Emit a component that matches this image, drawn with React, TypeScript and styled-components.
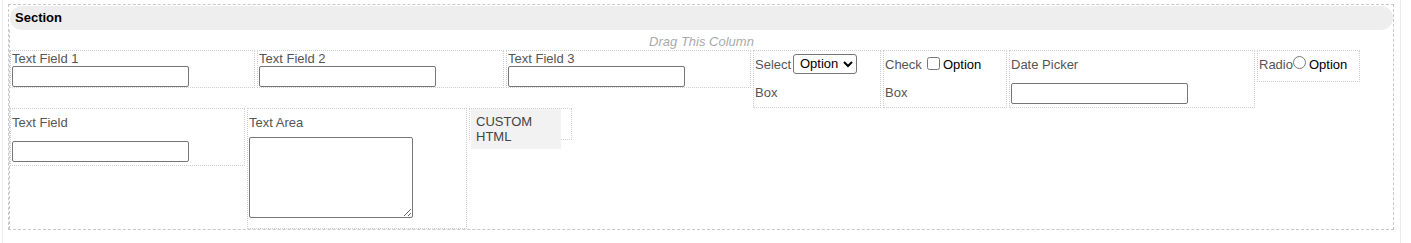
import styled, { createGlobalStyle } from "styled-components";

const GlobalStyle = createGlobalStyle`
  body {
    margin: 0;
    background: #fff;
    font-family: "Liberation Sans", Arial, sans-serif;
  }
`;

const Page = styled.div`
  box-sizing: border-box;
  margin-left: 2px;
  width: 1399px;
  height: 243px;
  padding: 4px 0 0 5px;
  border-left: 1px solid #ececec;
  border-right: 1px solid #ececec;
`;

const Section = styled.div`
  box-sizing: border-box;
  width: 1386px;
  border: 1px dashed #c8c8c8;
`;

const SectionHeader = styled.div`
  margin: 1px 0 0 1px;
  height: 24px;
  line-height: 24px;
  padding-left: 5px;
  background: #eeeeee;
  border-radius: 12px;
  font-size: 13px;
  font-weight: 700;
  color: #000;
`;

const Column = styled.div`
  border-left: 1px dashed #c8c8c8;
`;

const DragHint = styled.div`
  padding-top: 4px;
  line-height: 16px;
  text-align: center;
  font-size: 13px;
  font-style: italic;
  color: #aaa;
`;

const Fields = styled.div`
  display: flex;
  flex-wrap: wrap;
  align-items: flex-start;
  column-gap: 2px;
`;

const Cell = styled.div<{ $w: number; $h?: number }>`
  display: flow-root;
  box-sizing: border-box;
  width: ${p => p.$w}px;
  min-height: 32px;
  ${p => (p.$h ? `height: ${p.$h}px;` : "")}
  padding-left: 1px;
  border: 1px dotted #cfcfcf;
  font-size: 13px;
  line-height: 28px;
  color: #555;
`;

const FieldLabel = styled.div<{ $compact?: boolean }>`
  line-height: ${p => (p.$compact ? 15 : 28)}px;
  white-space: nowrap;
`;

const TextInput = styled.input<{ $compact?: boolean }>`
  display: block;
  box-sizing: border-box;
  width: 177px;
  height: 21px;
  margin: ${p => (p.$compact ? "0" : "4px 0 3px")};
  padding: 1px 2px;
  border: 1px solid #767676;
  border-radius: 2px;
  background: #fff;
`;

const TextArea = styled.textarea`
  display: block;
  box-sizing: border-box;
  width: 164px;
  height: 81px;
  margin: 0 0 10px;
  border: 1px solid #767676;
  border-radius: 2px;
`;

const SideLabel = styled.span<{ $w: number }>`
  float: left;
  width: ${p => p.$w}px;
`;

const Select = styled.select`
  box-sizing: border-box;
  width: 64px;
  height: 20px;
  margin-left: 1px;
  padding: 0 0 0 2px;
  font-family: "Liberation Sans", Arial, sans-serif;
  font-size: 13px;
  color: #000;
  border: 1px solid #767676;
  border-radius: 3px;
  background: #fff;
  vertical-align: 1px;
`;

const Check = styled.input`
  width: 13px;
  height: 13px;
  margin: 0 3px 0 4px;
  vertical-align: -1px;
`;

const Radio = styled.input`
  width: 13px;
  height: 13px;
  margin: 0 3px 0 0;
  vertical-align: 0;
`;

const OptionText = styled.span`
  color: #000;
`;

const CustomBlock = styled.div`
  box-sizing: border-box;
  width: 90px;
  height: 40px;
  padding: 5px;
  background: #f2f2f2;
  font-size: 13px;
  line-height: 15px;
  color: #444;
`;

const compactFields = [
  { label: "Text Field 1", w: 245 },
  { label: "Text Field 2", w: 247 },
  { label: "Text Field 3", w: 245 },
];

export default function App() {
  return (
    <>
      <GlobalStyle />
      <Page>
        <Section>
          <SectionHeader>Section</SectionHeader>
          <Column>
            <DragHint>Drag This Column</DragHint>
            <Fields>
              {compactFields.map(f => (
                <Cell key={f.label} $w={f.w}>
                  <FieldLabel $compact>{f.label}</FieldLabel>
                  <TextInput $compact type="text" />
                </Cell>
              ))}

              <Cell $w={128}>
                <SideLabel $w={37}>Select Box</SideLabel>
                <Select defaultValue="option">
                  <option value="option">Option</option>
                </Select>
              </Cell>

              <Cell $w={124}>
                <SideLabel $w={38}>Check Box</SideLabel>
                <Check type="checkbox" />
                <OptionText>Option</OptionText>
              </Cell>

              <Cell $w={246}>
                <FieldLabel>Date Picker</FieldLabel>
                <TextInput type="text" />
              </Cell>

              <Cell $w={103}>
                Radio
                <Radio type="radio" name="radio" />
                <OptionText>Option</OptionText>
              </Cell>

              <Cell $w={235}>
                <FieldLabel>Text Field</FieldLabel>
                <TextInput type="text" />
              </Cell>

              <Cell $w={220}>
                <FieldLabel>Text Area</FieldLabel>
                <TextArea />
              </Cell>

              <Cell $w={103} $h={32}>
                <CustomBlock>CUSTOM HTML</CustomBlock>
              </Cell>
            </Fields>
          </Column>
        </Section>
      </Page>
    </>
  );
}
